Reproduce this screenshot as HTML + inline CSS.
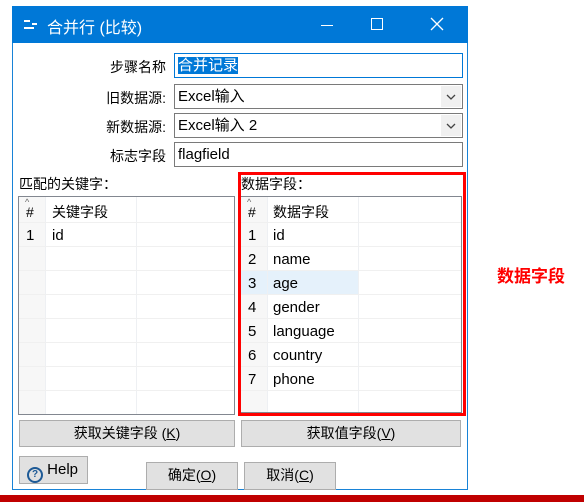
<!DOCTYPE html>
<html><head><meta charset="utf-8"><style>
*{margin:0;padding:0;box-sizing:border-box}
body{width:584px;height:502px;background:#fff;position:relative;overflow:hidden;font-family:"Liberation Sans","Noto Sans CJK SC",sans-serif;font-size:14px;color:#000}
.a{position:absolute}
.win{left:12px;top:6px;width:456px;height:484px;border:1px solid #1883d7;background:#fff}
.title{left:12px;top:6px;width:456px;height:37px;background:#0078d7;color:#fff;font-size:16px}
.lbl{text-align:right;width:160px;left:6px;font-size:14px}
.inp{left:174px;width:289px;height:25px;border:1px solid #7a7a7a;background:#fff;padding:0 3px;font-size:15px;line-height:23px}
.dd{position:absolute;right:1px;top:1px;width:20px;height:21px;background:#f0f0f0}
.tbl{border:1px solid #828790;background:#fff}
.btn{background:#e1e1e1;border:1px solid #adadad;text-align:center;font-size:14px;line-height:25px}
.row{position:absolute;left:0;height:24px;line-height:24px;font-size:15px}
.vl{position:absolute;top:0;bottom:0;width:1px;background:#eef0f3}
.hl{position:absolute;left:0;right:0;height:1px;background:#f0f0f0}
</style></head><body>
<div class="a win"></div>
<div class="a title">
 <div class="a" style="left:12px;top:14px;width:6px;height:2px;background:#fff"></div>
 <div class="a" style="left:12px;top:21px;width:10px;height:2px;background:#fff"></div>
 <div class="a" style="left:20px;top:17px;width:5px;height:2px;background:#fff"></div>
 <div class="a" style="left:35px;top:8px">合并行 (比较)</div>
 <div class="a" style="left:309px;top:19px;width:12px;height:1px;background:#fff"></div>
 <div class="a" style="left:359px;top:12px;width:12px;height:12px;border:1px solid #fff"></div>
 <svg class="a" style="left:418px;top:11px" width="14" height="14"><path d="M1 1L13 13M13 1L1 13" stroke="#fff" stroke-width="1.3"/></svg>
</div>
<div class="a lbl" style="top:57px">步骤名称</div>
<div class="a inp" style="top:53px;border-color:#0078d7"><span style="background:#0078d7;color:#fff">合并记录</span></div>
<div class="a lbl" style="top:88px">旧数据源:</div>
<div class="a inp" style="top:84px">Excel输入<div class="dd"><svg width="20" height="21"><path d="M6 9L10 13L14 9" stroke="#444" stroke-width="1.3" fill="none"/></svg></div></div>
<div class="a lbl" style="top:117px">新数据源:</div>
<div class="a inp" style="top:113px">Excel输入 2<div class="dd"><svg width="20" height="21"><path d="M6 9L10 13L14 9" stroke="#444" stroke-width="1.3" fill="none"/></svg></div></div>
<div class="a lbl" style="top:146px">标志字段</div>
<div class="a inp" style="top:142px">flagfield</div>
<div class="a" style="left:19px;top:174px">匹配的关键字：</div>
<div class="a" style="left:241px;top:174px">数据字段：</div>

<div class="a tbl" style="left:18px;top:196px;width:217px;height:219px">
 <div class="a" style="left:0;top:0;width:26px;height:100%;background:#f7f7f7"></div>
 <div class="vl" style="left:26px"></div><div class="vl" style="left:117px"></div>
 <div class="hl" style="top:25px"></div><div class="hl" style="top:49px"></div><div class="hl" style="top:73px"></div><div class="hl" style="top:97px"></div><div class="hl" style="top:121px"></div><div class="hl" style="top:145px"></div><div class="hl" style="top:169px"></div><div class="hl" style="top:193px"></div>
 <div class="a" style="left:6px;top:0;font-size:9px;color:#666">^</div>
 <div class="row" style="top:3px;left:7px;font-size:14px">#</div>
 <div class="row" style="top:3px;left:33px;font-size:14px">关键字段</div>
 <div class="row" style="top:27px;left:7px">1</div><div class="row" style="top:27px;left:33px">id</div>
</div>

<div class="a tbl" style="left:240px;top:196px;width:222px;height:217px">
 <div class="a" style="left:0;top:0;width:26px;height:100%;background:#f7f7f7"></div>
 <div class="a" style="left:0;top:74px;width:117px;height:24px;background:#e5f1fb"></div>
 <div class="vl" style="left:26px"></div><div class="vl" style="left:117px"></div>
 <div class="hl" style="top:25px"></div><div class="hl" style="top:49px"></div><div class="hl" style="top:73px"></div><div class="hl" style="top:97px"></div><div class="hl" style="top:121px"></div><div class="hl" style="top:145px"></div><div class="hl" style="top:169px"></div><div class="hl" style="top:193px"></div>
 <div class="a" style="left:6px;top:0;font-size:9px;color:#666">^</div>
 <div class="row" style="top:3px;left:7px;font-size:14px">#</div>
 <div class="row" style="top:3px;left:32px;font-size:14px">数据字段</div>
 <div class="row" style="top:27px;left:7px">1</div><div class="row" style="top:27px;left:32px">id</div>
 <div class="row" style="top:51px;left:7px">2</div><div class="row" style="top:51px;left:32px">name</div>
 <div class="row" style="top:75px;left:7px">3</div><div class="row" style="top:75px;left:32px">age</div>
 <div class="row" style="top:99px;left:7px">4</div><div class="row" style="top:99px;left:32px">gender</div>
 <div class="row" style="top:123px;left:7px">5</div><div class="row" style="top:123px;left:32px">language</div>
 <div class="row" style="top:147px;left:7px">6</div><div class="row" style="top:147px;left:32px">country</div>
 <div class="row" style="top:171px;left:7px">7</div><div class="row" style="top:171px;left:32px">phone</div>
</div>
<div class="a" style="left:238px;top:172px;width:228px;height:244px;border:3px solid #f00"></div>

<div class="a btn" style="left:19px;top:420px;width:216px;height:27px">获取关键字段 (<u>K</u>)</div>
<div class="a btn" style="left:241px;top:420px;width:220px;height:27px">获取值字段(<u>V</u>)</div>
<div class="a btn" style="left:19px;top:456px;width:69px;height:28px;text-align:left;padding-left:7px;font-size:15px"><span style="display:inline-block;width:16px;height:16px;border:2px solid #1e5a96;border-radius:50%;font-size:10px;line-height:12px;text-align:center;color:#1e5a96;font-weight:bold;vertical-align:-3px">?</span> Help</div>
<div class="a btn" style="left:146px;top:462px;width:92px;height:28px">确定(<u>O</u>)</div>
<div class="a btn" style="left:244px;top:462px;width:92px;height:28px">取消(<u>C</u>)</div>

<div class="a" style="left:497px;top:262px;color:#f00;font-weight:bold;font-size:17px">数据字段</div>
<div class="a" style="left:0;top:495px;width:584px;height:7px;background:#c00000"></div>
</body></html>
